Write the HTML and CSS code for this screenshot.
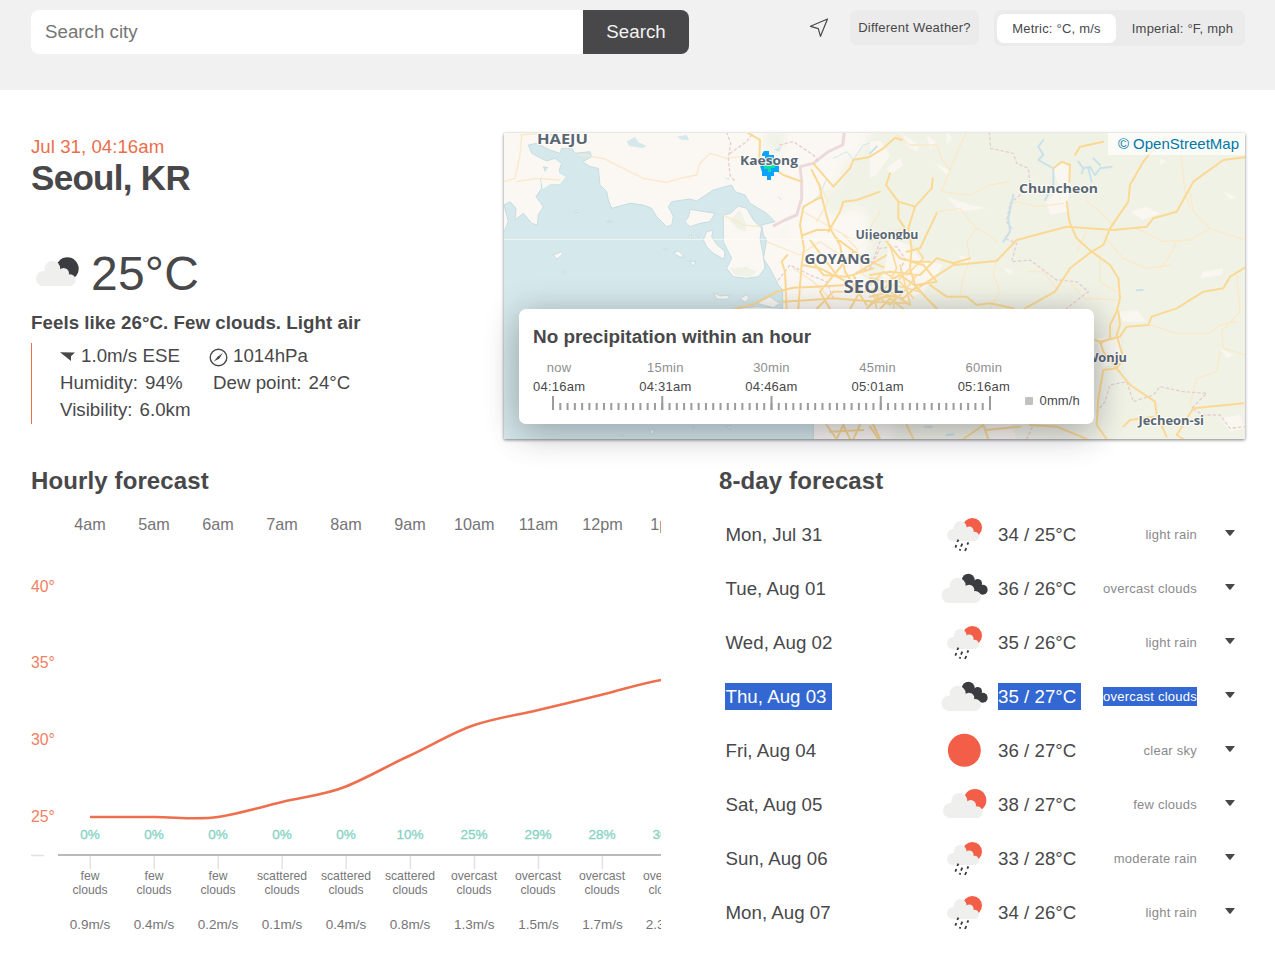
FILE: index.html
```html
<!DOCTYPE html>
<html lang="en">
<head>
<meta charset="utf-8">
<title>Seoul, KR - weather</title>
<link rel="stylesheet" href="styles.css">
</head>
<body>
<svg class="defs" width="0" height="0">
  <symbol id="cloud" viewBox="0 0 120 76"><circle cx="23" cy="53" r="23"/><circle cx="49" cy="24" r="24"/><circle cx="83" cy="37" r="16"/><circle cx="102" cy="57" r="17"/><path d="M23 30L49 12L90 36L112 50L108 74Q106 76 102 76H23Z"/></symbol>
  <symbol id="few-day" viewBox="30 180 150 120"><circle class="sun" cx="135" cy="229" r="34"/><use href="#cloud" class="cloud" x="39" y="207" width="120" height="76"/></symbol>
  <symbol id="few-night" viewBox="30 180 150 120"><circle class="dark" cx="133" cy="230" r="34"/><use href="#cloud" class="cloud" x="39" y="207" width="120" height="76"/></symbol>
  <symbol id="rain" viewBox="30 41 150 120"><circle class="sun" cx="127" cy="82" r="29"/><use href="#cloud" class="cloud" x="51" y="62" width="97" height="61"/><path class="drops" d="M85 118L82 125M79 134L76 142M97 130L93 139M115 126L112 133M91 146L89 151M109 143L105 152"/></symbol>
  <symbol id="overcast" viewBox="30 205 150 120"><g class="dark"><circle cx="115" cy="241" r="19"/><circle cx="143" cy="251" r="13"/><circle cx="140" cy="264" r="17"/><circle cx="158" cy="270" r="15"/></g><use href="#cloud" class="cloud" x="34" y="234" width="120" height="76"/></symbol>
  <symbol id="clear" viewBox="30 15 150 120"><circle class="sun" cx="103" cy="76" r="49.5"/></symbol>
  <symbol id="caret" viewBox="0 0 10 6"><path d="M0 0H10L5.7 5.4Q5 6 4.3 5.4Z"/></symbol>
</svg>

<header class="topbar">
  <div class="search">
    <div class="field">Search city</div>
    <div class="submit">Search</div>
  </div>
  <div class="controls">
    <svg class="locate" width="20" height="20" viewBox="0 0 20 20"><path d="M18.5 1L1.5 8.3L9.3 10.6L11.5 18.3Z"/></svg>
    <div class="different">Different Weather?</div>
    <div class="units"><div class="unit on">Metric: °C, m/s</div><div class="unit off">Imperial: °F, mph</div></div>
  </div>
</header>

<main>
  <div class="columns top">
    <section class="current">
      <div class="date">Jul 31, 04:16am</div>
      <h2>Seoul, KR</h2>
      <div class="temp"><svg width="50" height="40"><use href="#few-night"/></svg><span>25°C</span></div>
      <div class="feels">Feels like 26°C. Few clouds. Light air</div>
      <div class="metrics">
        <div class="line"><span class="m1"><svg class="wind" width="15" height="11" viewBox="0 0 15 11"><path d="M0 1.2L15 1.6L11 5.2V10Z"/></svg>1.0m/s ESE</span><span><svg class="gauge" width="19" height="19" viewBox="0 0 19 19"><circle cx="9.5" cy="9.5" r="8.3"/><path d="M4.8 13.6L9 8.3L10.2 7.7L14 4.8L10.2 10.7L8.6 11.5Z"/></svg>1014hPa</span></div>
        <div class="line"><span class="m2">Humidity:<i></i>94%</span><span>Dew point:<i></i>24°C</span></div>
        <div class="line"><span>Visibility:<i></i>6.0km</span></div>
      </div>
    </section>

    <section class="map">
      <svg class="tiles" width="741" height="306" viewBox="504 133 741 306">
        <defs>
          <clipPath id="tile-top"><rect x="504" y="133" width="741" height="106.6"/></clipPath>
          <filter id="soft" x="-10%" y="-10%" width="120%" height="120%"><feGaussianBlur stdDeviation="14"/></filter>
        </defs>
        <rect class="land" x="504" y="133" width="741" height="306"/>
        <g transform="translate(500 125) scale(.33333)">
          <g class="green" filter="url(#soft)">
            <path d="M1120 0L1090 70L1030 120L1010 190L1030 240L1100 260L1110 330L1090 440L1180 560L1180 960H2260V0Z"/>
            <path d="M790 20L860 20L850 80L800 80Z"/><path d="M970 190L1080 190L1040 260L980 270Z"/>
            <path d="M840 315L860 320L855 350L840 345Z"/>
          </g>
          <path class="water shore" d="M0 335L12 320L25 290L12 240L30 230L48 250L45 285L70 265L95 295L112 300L115 270L130 245L108 215L125 190L122 160L150 130L130 125L145 160L150 178L180 178L198 155L175 145L185 115L165 100L140 108L95 85L85 60L110 55L150 75L180 85L185 70L215 70L225 85L270 80L275 95L248 110L270 125L295 130L300 180L320 200L325 225L335 250L390 235L430 240L455 250L470 275L500 305L515 300L520 275L505 245L515 230L570 222L590 228L640 195L695 180L705 200L735 210L750 235L800 265L825 290L785 300L790 330L800 345L790 400L810 430L835 480L848 495V560L900 800L940 900V960H0Z"/>
          <path class="land" d="M122 160L150 120L172 120L178 145L198 155L180 178L150 178L128 192Z"/>
          <g class="isle shore">
            <path d="M670 270L692 265L715 243L740 250L760 285L785 310L780 340L788 380L795 430L775 455L740 460L700 455L680 430L695 400L670 350Z"/>
            <path d="M570 253L600 258L645 265L630 290L600 295L570 305L555 290L566 275Z"/>
            <path d="M620 320L640 315L635 335L650 358L675 380L672 403L640 385L620 365L610 345Z"/>
            <path d="M160 390L185 380L188 386L172 403ZM520 385L535 377L553 396L540 396ZM568 408L588 410L580 424ZM640 503L662 513L690 510L682 523L650 522ZM720 520L742 508L747 520L735 532ZM770 535L810 515L840 535L820 548ZM710 550L770 545L845 550V560H710ZM320 290L335 287L338 291ZM222 260L230 255L234 264ZM185 440L192 436L195 448ZM490 370L505 375L500 380ZM565 335L575 330L574 342ZM590 328L598 325L596 340ZM450 918L460 910L462 920L454 932ZM680 905L690 902L690 914ZM360 930L368 928V936ZM575 905L582 902V912Z"/>
          </g>
          <g class="green"><path d="M690 285L720 255L735 290L740 320L710 310ZM690 430L740 425L770 440L750 455L705 450Z"/></g>
          <g class="water"><path d="M380 50L405 35L415 52L440 62L430 70L388 63ZM530 35L560 30L568 46L545 44ZM834 212L846 224L838 222ZM670 158L690 160L685 164ZM148 25L165 30L158 38ZM820 75L845 64L838 80Z"/></g>
          <path class="minor" d="M60 30L120 25M12 170L45 160L60 90L65 30M180 165L110 160L50 170M235 88L310 100L370 130L430 160L500 172L540 160L590 150L600 115L630 85L680 100L720 95M670 270L730 300L780 305M800 350L900 390L960 350L1020 390M910 260L980 300L1060 345M1060 345L1110 310L1140 260M950 290L985 230L960 180M880 430L940 470L990 520M1020 320L1070 370L1090 450L1150 480"/>
          <path class="border-line" d="M1033 22L1028 60L985 80L940 115L900 125L905 170L905 220L890 270L855 285L822 302"/>
          <path class="district" d="M680 22L692 55L685 100L690 150L705 170M690 85L740 50L760 22M840 60L880 50L940 90L955 110M835 465L870 420L930 450L980 470L1000 520M1140 350L1110 430L1070 440L1060 500"/>
          <path class="stream" d="M1000 100L1040 80L1060 105L1090 60L1140 45M910 250L960 210L980 160"/>
          <path class="road" d="M742 22L780 45L778 100L850 150L905 170M935 135L958 180L965 215L910 245L900 300L912 370L905 420M965 215L990 310L1020 360L1035 440L1100 540M990 315L950 315L910 330M985 320L1020 260L1030 230L1070 225L1140 200M940 115L1000 185L1050 130L1060 105L1140 90M705 552L760 538L830 500L880 488L950 485L1040 480M848 530L930 525L1000 520L1130 530M860 552L855 440L845 410L862 390M895 552L900 480L905 420L960 430L1040 470M930 345L960 385L1010 450M990 552L960 500L1010 440L1060 380M930 400L970 450L1040 455L1120 430M950 552L1000 500L1090 500L1180 480M1050 552L1080 500L1060 450L1160 390M1100 552L1130 520L1200 510M1010 340L1090 400L1180 440M980 900L1010 942L1030 900L1050 942M1080 900L1060 942M1120 900L1140 942M990 920L1090 915"/>
          <path class="seam" d="M12 343H1110"/>
        </g>
        <g transform="translate(870 125) scale(.33333)">
          <path class="clearing" d="M0 50L30 45L60 90L20 150L0 160ZM50 130L90 100L100 120L60 150ZM100 30L150 60L140 80L110 60ZM170 30L200 50L180 70ZM190 110L240 135L230 150ZM545 125L580 108L605 130L600 180L590 260L540 270L530 230L570 190ZM230 215L300 240L350 250L270 260ZM60 340L120 360L150 400L220 420L160 500L100 530L30 500ZM780 260L830 245L870 265L820 285ZM740 560L800 555L830 590L760 590ZM680 640L750 635L760 710L700 725ZM230 10L245 40L230 60ZM1000 440L1060 430L1055 450L990 460ZM260 390L310 400L290 415ZM400 430L430 435L420 450ZM1050 670L1090 690L1070 700ZM1050 880L1110 870L1125 910L1080 920ZM350 900L420 890L440 942H360ZM840 870L880 890L850 900ZM1060 200L1100 215L1080 225ZM870 100L890 110L870 120Z"/>
          <path class="minor" d="M80 30L120 60L200 60L215 100L240 135L275 50L290 22M240 135L215 200L300 210L360 180L420 170M420 240L440 230L500 245L580 235M650 230L690 260L730 300M200 260L270 250L320 310L290 350L300 400L280 460L270 510M320 310L360 330L380 350M740 310L800 310L880 350L960 345L1020 310L1080 330L1125 345M960 200L970 260L1020 310M690 390L690 470L740 500M650 320L620 380M380 400L370 450L390 500L360 550M600 470L640 520L740 525M840 600L920 625L1020 625L1050 600L1100 590M1100 450L1110 560L1055 620L1060 670L1125 690M1050 680L1040 740L980 760L960 840M920 350L900 390L870 430M560 490L520 440L470 440M960 250L945 200L930 60M850 40L860 22M0 350L60 320L110 310M700 330L760 400L830 430L900 420"/>
          <path class="district" d="M358 22L362 70L430 85L440 115L475 130L480 180M450 210L420 235L410 290L425 310L405 340L440 355L425 410L480 405L560 465L620 470L655 500L590 550M0 430L30 370L80 365L105 400L90 440M680 860L705 830L720 780L770 770L790 830L850 810L870 785L940 800L1010 805L965 850L1000 870L1050 870L1080 910L1125 905M470 942L490 900"/>
          <path class="stream wide" d="M520 45L505 65L520 90L505 105L550 130L550 180L525 225M625 110L640 130L660 125L675 150L690 130L725 125M640 130L635 145M655 130L665 170M670 100L690 120M430 210L415 280L420 320L400 350M0 85L20 65"/>
          <path class="stream wide" d="M800 496L818 495M165 905L185 905M230 930L250 928"/>
          <path class="road" d="M0 95L40 70L75 38L95 45M60 145L48 180L85 230L135 245L185 190L188 160M85 230L85 280L105 310M135 245L115 310L125 370L120 430L135 480M200 265L150 370L110 380M0 450L60 440L150 450L200 400L250 415L300 400M150 485L250 420L380 408L440 345L590 305L730 315L830 305L850 280L920 260L970 170L1060 105L1125 97M720 310L775 230L780 180L820 110L860 60L890 40M615 90L630 65L700 50M550 130L575 110L600 120L598 170M590 230L598 290L620 340L665 380L720 420L745 460L750 520L740 560L720 600L720 640L690 655M720 310L700 360L665 380L600 430L555 500L465 550M140 480L200 470L160 420L125 410M180 480L230 515L290 515L320 540L360 535L430 550M50 350L90 400L130 410L180 410M0 460L50 470L90 450L140 485L100 520L50 510L0 540M0 515L60 500L120 540M30 552L60 520L100 552M135 480L170 520L200 550M1125 428L1080 455L1060 490L1000 500L920 550L845 575L835 600L770 605L750 635L690 650L700 680L740 730L780 780L855 830L860 870L890 935M745 560L750 600L740 630L760 700L740 730L700 735L685 820L680 900L710 942M675 645L690 650M760 905L780 885L850 875M940 942L920 930L970 850L1120 835M480 900L560 905L650 942M280 942L340 900L355 942M350 915L450 905M0 905L25 942M110 900L130 942"/>
          <path class="fine" d="M0 480L40 440L90 470L130 520M0 500L60 540L110 490L140 450M20 552L10 500L70 480L150 500M70 552L80 470L120 430M0 530L120 535L90 420M60 360L80 430L40 500M140 370L160 400L110 450"/>
        </g>
        <path class="rain-blue" d="M764 151H769V155H774V161L779 166V172H774V176H771V180H767V176H762V172L760 166L765 163V156H762V154Z"/>
        <path class="rain-green" d="M764 162H775V168H771V172H768V169H764Z"/>
        <g class="labels">
          <text x="537" y="144" font-size="13.5" textLength="51" lengthAdjust="spacingAndGlyphs">HAEJU</text>
          <text x="740" y="165" font-size="13" textLength="58" lengthAdjust="spacingAndGlyphs">Kaesong</text>
          <text x="855.5" y="239" font-size="12.5" textLength="63" lengthAdjust="spacingAndGlyphs" clip-path="url(#tile-top)">Uijeongbu</text>
          <text x="804.5" y="263.5" font-size="14.5" textLength="66" lengthAdjust="spacingAndGlyphs">GOYANG</text>
          <text x="843.5" y="293" font-size="17" textLength="60" lengthAdjust="spacingAndGlyphs">SEOUL</text>
          <text x="1019" y="193" font-size="13" textLength="79" lengthAdjust="spacingAndGlyphs">Chuncheon</text>
          <text x="1086" y="362" font-size="12.5" textLength="41" lengthAdjust="spacingAndGlyphs">Wonju</text>
          <text x="1138.5" y="425" font-size="12.5" textLength="65.5" lengthAdjust="spacingAndGlyphs">Jecheon-si</text>
        </g>
      </svg>
      <div class="credit">© OpenStreetMap</div>
      <div class="precip">
        <h3>No precipitation within an hour</h3>
        <div class="precip-row">
          <div class="timeline">
            <div class="marks">
              <div><small>now</small>04:16am</div><div><small>15min</small>04:31am</div><div><small>30min</small>04:46am</div><div><small>45min</small>05:01am</div><div><small>60min</small>05:16am</div>
            </div>
            <svg class="ticks" width="440" height="14" viewBox="0 0 440 14"><path d="M0 10.5H440" stroke-width="7" stroke-dasharray="2 5.283"/><path d="M0 7H440" stroke-width="14" stroke-dasharray="2 107.25"/></svg>
          </div>
          <div class="rate"><b></b>0mm/h</div>
        </div>
      </div>
    </section>
  </div>

  <div class="columns bottom">
    <section class="hourly">
      <h3 class="title">Hourly forecast</h3>
      <svg class="chart" width="630" height="440" viewBox="31 508 630 440">
        <g class="hours"><text x="90" y="529.5">4am</text><text x="154" y="529.5">5am</text><text x="218" y="529.5">6am</text><text x="282" y="529.5">7am</text><text x="346" y="529.5">8am</text><text x="410" y="529.5">9am</text><text x="474.3" y="529.5">10am</text><text x="538.4" y="529.5">11am</text><text x="602.5" y="529.5">12pm</text><text x="666" y="529.5">1pm</text></g>
        <g class="degrees"><text x="31" y="591.5">40°</text><text x="31" y="668">35°</text><text x="31" y="745">30°</text><text x="31" y="821.5">25°</text></g>
        <path class="curve" d="M90 817C111 817 132 817 154 817S197 820 218 817S261 807 282 802S325 795 346 786.5S389 765 410 755.5S453 732 474.5 725S517 715 538.5 710S581 699.7 602.6 694.5S645 682 667 679"/>
        <g class="chance"><text x="90" y="839">0%</text><text x="154" y="839">0%</text><text x="218" y="839">0%</text><text x="282" y="839">0%</text><text x="346" y="839">0%</text><text x="410" y="839">10%</text><text x="474" y="839">25%</text><text x="538" y="839">29%</text><text x="602" y="839">28%</text><text x="666" y="839">30%</text></g>
        <path class="axis" d="M58 855H661"/>
        <path class="notches" d="M31 855.5H44M90.3 856V869M154.2 856V869M218.2 856V869M282.2 856V869M346.2 856V869M410.4 856V869M474.5 856V869M538.5 856V869M602.4 856V869"/>
        <g class="sky"><text x="90" y="879.5">few</text><text x="90" y="893.5">clouds</text><text x="154" y="879.5">few</text><text x="154" y="893.5">clouds</text><text x="218" y="879.5">few</text><text x="218" y="893.5">clouds</text><text x="282" y="879.5">scattered</text><text x="282" y="893.5">clouds</text><text x="346" y="879.5">scattered</text><text x="346" y="893.5">clouds</text><text x="410" y="879.5">scattered</text><text x="410" y="893.5">clouds</text><text x="474" y="879.5">overcast</text><text x="474" y="893.5">clouds</text><text x="538" y="879.5">overcast</text><text x="538" y="893.5">clouds</text><text x="602" y="879.5">overcast</text><text x="602" y="893.5">clouds</text><text x="666" y="879.5">overcast</text><text x="666" y="893.5">clouds</text></g>
        <g class="wind-speed"><text x="90" y="929">0.9m/s</text><text x="154" y="929">0.4m/s</text><text x="218" y="929">0.2m/s</text><text x="282" y="929">0.1m/s</text><text x="346" y="929">0.4m/s</text><text x="410" y="929">0.8m/s</text><text x="474.3" y="929">1.3m/s</text><text x="538.4" y="929">1.5m/s</text><text x="602.4" y="929">1.7m/s</text><text x="666" y="929">2.3m/s</text></g>
      </svg>
    </section>

    <section class="daily">
      <h3 class="title">8-day forecast</h3>
      <div class="day"><span class="name">Mon, Jul 31</span><svg class="ico" width="50" height="40"><use href="#rain"/></svg><span class="range">34 / 25°C</span><span class="desc">light rain</span><svg class="caret" width="10" height="6"><use href="#caret"/></svg></div>
      <div class="day"><span class="name">Tue, Aug 01</span><svg class="ico" width="50" height="40"><use href="#overcast"/></svg><span class="range">36 / 26°C</span><span class="desc">overcast clouds</span><svg class="caret" width="10" height="6"><use href="#caret"/></svg></div>
      <div class="day"><span class="name">Wed, Aug 02</span><svg class="ico" width="50" height="40"><use href="#rain"/></svg><span class="range">35 / 26°C</span><span class="desc">light rain</span><svg class="caret" width="10" height="6"><use href="#caret"/></svg></div>
      <div class="day selected"><span class="name"><mark>Thu, Aug 03</mark></span><svg class="ico" width="50" height="40"><use href="#overcast"/></svg><span class="range"><mark>35 / 27°C</mark></span><span class="desc"><mark>overcast clouds</mark></span><svg class="caret" width="10" height="6"><use href="#caret"/></svg></div>
      <div class="day"><span class="name">Fri, Aug 04</span><svg class="ico" width="50" height="40"><use href="#clear"/></svg><span class="range">36 / 27°C</span><span class="desc">clear sky</span><svg class="caret" width="10" height="6"><use href="#caret"/></svg></div>
      <div class="day"><span class="name">Sat, Aug 05</span><svg class="ico" width="50" height="40"><use href="#few-day"/></svg><span class="range">38 / 27°C</span><span class="desc">few clouds</span><svg class="caret" width="10" height="6"><use href="#caret"/></svg></div>
      <div class="day"><span class="name">Sun, Aug 06</span><svg class="ico" width="50" height="40"><use href="#rain"/></svg><span class="range">33 / 28°C</span><span class="desc">moderate rain</span><svg class="caret" width="10" height="6"><use href="#caret"/></svg></div>
      <div class="day"><span class="name">Mon, Aug 07</span><svg class="ico" width="50" height="40"><use href="#rain"/></svg><span class="range">34 / 26°C</span><span class="desc">light rain</span><svg class="caret" width="10" height="6"><use href="#caret"/></svg></div>
    </section>
  </div>
</main>
</body>
</html>
```
FILE: styles.css
```css
* { box-sizing: border-box; }
html, body { margin: 0; height: 959px; overflow: hidden; }
body { background: #fff; color: #48484a; font: 18.7px/27px "Liberation Sans", Arial, sans-serif; letter-spacing: .02px; }
h2, h3 { margin: 0; }
svg { display: block; flex: none; }
.defs { height: 0; }
.sun { fill: #f25e47; }
.dark { fill: #3b3c40; }
.cloud { fill: #efefee; }
.drops { stroke: #3b3c40; stroke-width: 5.5; fill: none; }

.topbar { height: 90px; background: #f1f1f1; padding: 10px 30px 0 31px; display: flex; justify-content: space-between; align-items: flex-start; }
.search { display: flex; width: 658px; height: 44px; line-height: 43px; border-radius: 8px; overflow: hidden; }
.field { flex: 1; background: #fff; color: #757575; padding-left: 14px; }
.submit { width: 106px; background: #48484a; color: #f2f2f2; text-align: center; }
.controls { display: flex; font-size: 13px; letter-spacing: .22px; }
.locate { margin: 8px 21px 0 0; fill: none; stroke: #48484a; stroke-width: 1.2; stroke-linejoin: round; }
.different { width: 129px; height: 35px; line-height: 35px; background: #ebebeb; border-radius: 7px; text-align: center; margin-right: 15px; white-space: nowrap; }
.units { width: 251px; height: 36px; display: flex; padding: 4px 3px; background: #ebebeb; border-radius: 7px; white-space: nowrap; }
.unit { flex: 1; height: 29px; line-height: 29px; text-align: center; border-radius: 7px; }
.unit.on { flex: 0 0 119px; background: #fff; }
.unit.off { padding-left: 7px; }

main { padding: 43px 30px 0 31px; }
.columns { display: flex; justify-content: space-between; }
.top { height: 332px; }
.current { width: 400px; }
.date { color: #eb6e4b; line-height: 27px; }
h2 { font-size: 35px; line-height: 36px; letter-spacing: -.7px; }
.temp { display: flex; align-items: center; height: 60px; margin-top: 48px; font-size: 48px; letter-spacing: .2px; }
.temp svg { margin: -4px 7px 0 2px; }
.temp span { margin: -2px 0 0 1px; }
.feels { font-weight: bold; margin-top: 5px; letter-spacing: .06px; white-space: nowrap; }
.metrics { border-left: 1px solid #eb6e4b; margin-top: 7px; padding-left: 28px; }
.line { display: flex; height: 27px; line-height: 25px; white-space: nowrap; }
.line span { display: flex; align-items: center; height: 25px; }
.line i { width: 7px; }
.m1 { width: 149px; }
.m2 { width: 153px; }
.wind { margin: 2px 6px 0 0; fill: #48484a; }
.gauge { margin: 3px 5px 0 0; fill: #48484a; }
.gauge circle { fill: none; stroke: #48484a; stroke-width: 1.4; }

.map { position: relative; width: 741px; height: 306px; box-shadow: 0 1px 3px rgba(0,0,0,.5); }
.land { fill: #fbf8f3; }
.green { fill: #f0f2e6; }
.water { fill: #d5e8eb; }
.isle { fill: #fbf8f3; }
.shore { stroke: #c5dde3; stroke-width: 3; stroke-linejoin: round; }
.clearing { fill: #faf6f0; }
.minor, .road, .fine, .stream, .district, .border-line, .seam { fill: none; stroke-linejoin: round; stroke-linecap: round; }
.minor { stroke: #fae9c9; stroke-width: 4; }
.road { stroke: #fbd993; stroke-width: 6; }
.fine { stroke: #fadb9c; stroke-width: 5; }
.stream { stroke: #d2e7ed; stroke-width: 3; }
.stream.wide { stroke: #c9e2e9; stroke-width: 6; }
.district { stroke: #e7cdd1; stroke-width: 4; stroke-dasharray: 7 9; }
.border-line { stroke: #ecd9dc; stroke-width: 9; }
.seam { stroke: #fff; stroke-opacity: .6; stroke-width: 3; }
.rain-blue { fill: #0ca4fa; }
.rain-green { fill: #12dca5; }
.labels text { font-family: "Open Sans", sans-serif; font-weight: 700; letter-spacing: 0; fill: #5a6773; stroke: #fff; stroke-opacity: .8; stroke-width: 2.2px; stroke-linejoin: round; paint-order: stroke; }
.credit { position: absolute; right: 0; top: 0; width: 137px; height: 22px; background: rgba(255,255,255,.7); color: #0078a8; font-size: 15px; letter-spacing: 0; line-height: 22px; padding-right: 6px; text-align: right; white-space: nowrap; }
.precip { position: absolute; left: 15px; top: 176px; width: 575px; height: 115px; background: #fff; border-radius: 7px; padding: 15px 14px; box-shadow: 0 15px 35px rgba(50,50,93,.1), 0 5px 35px rgba(0,0,0,.25); }
.precip h3 { font-size: 18.9px; line-height: 26px; height: 27px; letter-spacing: 0; }
.precip-row { display: flex; justify-content: space-between; font-size: 13px; line-height: 19px; letter-spacing: .25px; }
.timeline { width: 477px; padding-top: 7px; }
.marks { display: flex; justify-content: space-between; text-align: center; }
.marks div { white-space: nowrap; }
.marks small { display: block; font-size: 13px; color: #8e8e90; }
.ticks { margin: 0 0 0 19px; fill: none; stroke: #9b9b9b; }
.rate { display: flex; align-items: center; height: 19px; margin-top: 40px; letter-spacing: .15px; }
.rate b { width: 8px; height: 8px; background: #c1c1c1; border-radius: 1px; margin-right: 7px; }

.title { font-size: 24px; line-height: 32px; letter-spacing: .12px; }
.hourly { width: 630px; }
.daily { width: 526px; }
.chart { margin-top: 11px; }
.chart text { letter-spacing: 0; }
.hours, .chance, .sky, .wind-speed { text-anchor: middle; }
.hours { font-size: 16.2px; fill: #747476; }
.degrees { font-size: 15.8px; fill: #f08062; }
.chance { font-size: 13.5px; fill: #85d2c3; stroke: #85d2c3; stroke-width: .3px; }
.sky { font-size: 12.2px; fill: #77777a; }
.wind-speed { font-size: 13.5px; fill: #747476; }
.curve { fill: none; stroke: #ee6f4d; stroke-width: 2.6; }
.axis { stroke: #bababa; stroke-width: 2; }
.notches { stroke: #e2e2e2; stroke-width: 1.5; }
.day { display: flex; align-items: center; height: 54px; padding-left: 6.5px; }
.daily .title { margin-bottom: 10px; }
.name { width: 214.5px; }
.ico { margin: 0 8px 0 0; }
.range { width: 99px; white-space: nowrap; }
.desc { width: 100px; text-align: right; font-size: 13px; letter-spacing: .24px; color: #8a8a8c; white-space: nowrap; }
.caret { margin: -3px 0 0 28px; fill: #48484a; }
mark { display: inline-block; background: #3367d1; color: #fff; }
.name mark { margin-left: -.5px; padding: 0 5px 0 .5px; }
.range mark { padding-right: 5px; }
.desc mark { height: 19px; line-height: 19px; }
```
